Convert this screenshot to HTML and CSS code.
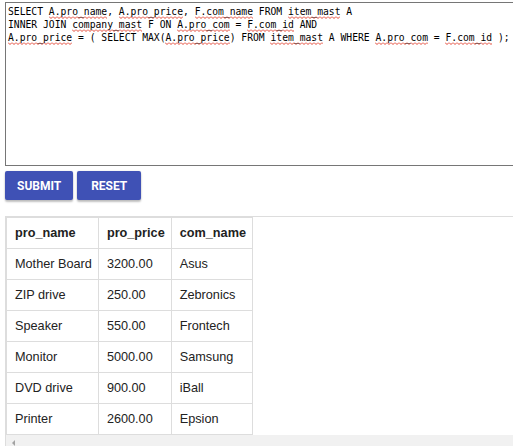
FILE: index.html
```html
<!DOCTYPE html>
<html>
<head>
<meta charset="utf-8">
<link rel="stylesheet" href="styles.css">
</head>
<body>
<div class="page">
  <div class="editor"><div class="line">SELECT <span class="sp">A.pro_name</span>, <span class="sp">A.pro_price</span>, <span class="sp">F.com_name</span> FROM <span class="sp">item_mast</span> A</div><div class="line">INNER JOIN <span class="sp">company_mast</span> F ON <span class="sp">A.pro_com</span> = <span class="sp">F.com_id</span> AND</div><div class="line"><span class="sp">A.pro_price</span> = ( SELECT MAX(<span class="sp">A.pro_price</span>) FROM <span class="sp">item_mast</span> A WHERE <span class="sp">A.pro_com</span> = <span class="sp">F.com_id</span> );</div></div>
  <div class="actions">
    <button class="btn">SUBMIT</button>
    <button class="btn">RESET</button>
  </div>
  <div class="result">
    <table class="grid">
      <thead>
        <tr><th>pro_name</th><th>pro_price</th><th>com_name</th></tr>
      </thead>
      <tbody>
        <tr><td>Mother Board</td><td>3200.00</td><td>Asus</td></tr>
        <tr><td>ZIP drive</td><td>250.00</td><td>Zebronics</td></tr>
        <tr><td>Speaker</td><td>550.00</td><td>Frontech</td></tr>
        <tr><td>Monitor</td><td>5000.00</td><td>Samsung</td></tr>
        <tr><td>DVD drive</td><td>900.00</td><td>iBall</td></tr>
        <tr><td>Printer</td><td>2600.00</td><td>Epsion</td></tr>
      </tbody>
    </table>
    <div class="hscroll"><span class="arrow"></span></div>
  </div>
</div>
</body>
</html>
```

FILE: styles.css
```css
html, body {
  margin: 0;
  padding: 0;
  background: #fff;
  overflow: hidden;
}

.page {
  padding: 2px 0 0 5px;
  width: 620px;
}

.editor {
  box-sizing: border-box;
  width: 560px;
  height: 164px;
  border: 1px solid #767676;
  padding: 2px 2px;
  font-family: "DejaVu Sans Mono", "Liberation Mono", monospace;
  font-size: 9.7px;
  line-height: 13px;
  color: #000;
  white-space: pre;
}

.sp {
  padding-bottom: 2px;
  background-image: url("data:image/svg+xml,%3Csvg xmlns='http://www.w3.org/2000/svg' width='4' height='3'%3E%3Cpolyline points='0,0.5 2,2.5 4,0.5' fill='none' stroke='%23e0301e' stroke-width='0.9'/%3E%3C/svg%3E");
  background-repeat: repeat-x;
  background-position: 0 100%;
  background-size: 4px 3px;
}

.actions {
  display: flex;
  gap: 4px;
  margin-top: 5px;
}

.btn {
  height: 29px;
  min-width: 64px;
  padding: 0 12px;
  border: none;
  border-radius: 2px;
  background: #3f51b5;
  color: #fff;
  font-family: Roboto, "Liberation Sans", sans-serif;
  font-size: 12px;
  font-weight: 700;
  box-shadow: 0 2px 2px rgba(0,0,0,0.24), 0 0 2px rgba(0,0,0,0.12);
  cursor: pointer;
}

.result {
  margin-top: 16px;
  border-top: 1px solid #ddd;
  border-left: 1px solid #ddd;
  width: 600px;
}

.grid {
  border-collapse: collapse;
  font-family: "Liberation Sans", Arial, sans-serif;
  font-size: 12.7px;
  line-height: 16px;
  color: #222;
}

.grid th,
.grid td {
  border: 1px solid #ddd;
  padding: 7px 6px 7px 8px;
  text-align: left;
  white-space: nowrap;
}

.grid th {
  font-weight: bold;
}

.hscroll {
  height: 15px;
  background: #f1f1f1;
  display: flex;
  align-items: center;
  padding-left: 6px;
}

.arrow {
  width: 0;
  height: 0;
  border-top: 3px solid transparent;
  border-bottom: 3px solid transparent;
  border-right: 3px solid #a3a3a3;
}
```
